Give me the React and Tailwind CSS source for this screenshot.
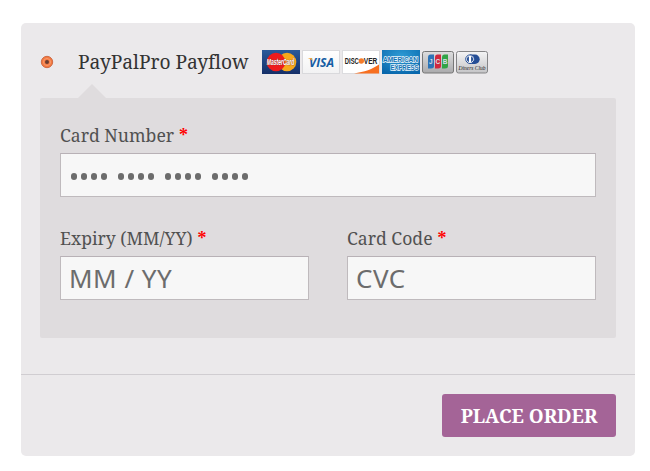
import React from "react";

const serif = "font-['Noto_Serif','Droid_Serif','DejaVu_Serif_Condensed','DejaVu_Serif',serif] [font-stretch:condensed]";
const sans = "font-['Noto_Sans','Open_Sans',sans-serif]";

function MasterCard() {
  return (
    <svg width="38" height="24" viewBox="0 0 38 24">
      <defs>
        <linearGradient id="mc" x1="0" y1="0" x2="0" y2="1">
          <stop offset="0" stopColor="#2a5a9a" />
          <stop offset="1" stopColor="#152f68" />
        </linearGradient>
      </defs>
      <rect width="38" height="24" fill="url(#mc)" />
      <circle cx="25" cy="12" r="9.300" fill="#f6a81c" />
      <circle cx="14" cy="12" r="9.300" fill="#ee1c1c" />
      <text x="4.800" y="15.200" textLength="27.500" lengthAdjust="spacingAndGlyphs" fontFamily="Liberation Sans" fontSize="8.400" fontWeight="bold" fontStyle="italic" fill="#fff" stroke="#8a3a30" strokeWidth="0.600" paintOrder="stroke">MasterCard</text>
    </svg>
  );
}

function Visa() {
  return (
    <svg width="38" height="24" viewBox="0 0 38 24">
      <defs>
        <linearGradient id="vs" x1="0" y1="0" x2="0" y2="1">
          <stop offset="0" stopColor="#fff" />
          <stop offset="1" stopColor="#f2f2f3" />
        </linearGradient>
      </defs>
      <rect x="0.5" y="0.5" width="37" height="23" fill="url(#vs)" stroke="#d9d9dc" />
      <text x="7" y="17" textLength="25" lengthAdjust="spacingAndGlyphs" fontFamily="Open Sans" fontSize="12.500" fontWeight="bold" fontStyle="italic" fill="#165da4">VISA</text>
      <path d="M5.500 8h4.200l1.300 3.600C9.700 9.700 8 8.600 5.500 8Z" fill="#f2a83b" />
    </svg>
  );
}

function Discover() {
  return (
    <svg width="38" height="24" viewBox="0 0 38 24">
      <rect x="0.5" y="0.5" width="37" height="23" fill="#fff" stroke="#dcdcdf" />
      <path d="M37 14.500C31 19 22 22 12 23.500H37Z" fill="#f76f20" />
      <text x="2.800" y="13.800" textLength="14" lengthAdjust="spacingAndGlyphs" fontFamily="Liberation Sans" fontSize="8.400" fontWeight="bold" fill="#222">DISC</text>
      <circle cx="19.300" cy="11" r="2.700" fill="#f47b2a" />
      <text x="21.800" y="13.800" textLength="13.600" lengthAdjust="spacingAndGlyphs" fontFamily="Liberation Sans" fontSize="8.400" fontWeight="bold" fill="#222">VER</text>
    </svg>
  );
}

function Amex() {
  return (
    <svg width="38" height="24" viewBox="0 0 38 24">
      <defs>
        <radialGradient id="ax" cx="0.500" cy="0.250" r="0.800">
          <stop offset="0" stopColor="#2d9ad4" />
          <stop offset="1" stopColor="#0867ac" />
        </radialGradient>
      </defs>
      <rect width="38" height="24" fill="url(#ax)" />
      <g fontFamily="Liberation Sans" fontSize="7.600" fontWeight="bold" fill="#1272b4" stroke="#e6f3fa" strokeWidth="1.500" paintOrder="stroke">
        <text x="1" y="11.500" textLength="35" lengthAdjust="spacingAndGlyphs">AMERICAN</text>
        <text x="8.500" y="19.500" textLength="28" lengthAdjust="spacingAndGlyphs">EXPRESS</text>
      </g>
    </svg>
  );
}

function Jcb() {
  return (
    <svg width="32" height="24" viewBox="0 0 32 24">
      <defs>
        <linearGradient id="jc" x1="0" y1="0" x2="0" y2="1">
          <stop offset="0" stopColor="#dededf" />
          <stop offset="1" stopColor="#aaaaac" />
        </linearGradient>
      </defs>
      <rect x="0.500" y="1.500" width="31" height="21.500" rx="2" fill="url(#jc)" stroke="#777" />
      <path d="M8.500 4.500H12V16q0 2.500-3 2.500H6V7.500q0-3 2.500-3Z" fill="#2d73b6" />
      <path d="M15.500 4.500H19V16q0 2.500-3 2.500H13V7.500q0-3 2.500-3Z" fill="#cf283e" />
      <path d="M22.500 4.500H26V16q0 2.500-3 2.500H20V7.500q0-3 2.500-3Z" fill="#31a447" />
      <g fontFamily="Liberation Sans" fontSize="6.500" fontWeight="bold" fill="#d6dee6">
        <text x="7" y="13.800">J</text>
        <text x="13.600" y="13.800">C</text>
        <text x="20.700" y="13.800">B</text>
      </g>
    </svg>
  );
}

function Diners() {
  return (
    <svg width="32" height="24" viewBox="0 0 32 24">
      <defs>
        <linearGradient id="dn" x1="0" y1="0" x2="0" y2="1">
          <stop offset="0" stopColor="#f4f4f5" />
          <stop offset="1" stopColor="#c5c5c7" />
        </linearGradient>
      </defs>
      <rect x="0.500" y="1.500" width="31" height="21.500" rx="2" fill="url(#dn)" stroke="#858587" />
      <path d="M14 4.500h5a4.700 4.700 0 0 1 0 9.400h-5Z" fill="#244e96" />
      <circle cx="14" cy="9.200" r="4.300" fill="#fff" stroke="#244e96" strokeWidth="1" />
      <path d="M12.900 6.200a3.200 3.200 0 0 0 0 6ZM15.100 6.200a3.200 3.200 0 0 1 0 6Z" fill="#244e96" />
      <text x="2.500" y="19.700" textLength="27" lengthAdjust="spacingAndGlyphs" fontFamily="Liberation Serif" fontSize="6.700" fontStyle="italic" fill="#222">Diners Club</text>
    </svg>
  );
}

function Field({ label, children }) {
  return (
    <label className="block">
      <span className={`${serif} flex h-[35px] items-start whitespace-nowrap text-[17.6px] leading-[35px]`}>
        <span className="text-[#515151]">{label}</span>
        <span className="ml-[5px] font-bold text-[#f00]">*</span>
      </span>
      <span className={`${sans} flex h-11 items-center border border-[#bfbabd] border-t-[#b8b1b6] bg-[#f7f7f7] px-[8px] text-[#6c6c6c]`}>
        {children}
      </span>
    </label>
  );
}

export default function App() {
  return (
    <main className="h-[471px] w-[650px] bg-white pl-[21px] pt-[23px]">
      <section className="h-[433px] w-[614px] rounded-[5px] bg-[#ebe9eb]">
        <header className="flex h-[75px] pl-[19px] pt-[27px]">
          <svg className="mt-[5px]" width="14" height="14" viewBox="0 0 14 14">
            <circle cx="7" cy="7" r="5.700" fill="#f4793f" stroke="#c86440" strokeWidth="0.900" />
            <circle cx="7" cy="7" r="3.500" fill="none" stroke="#f79b71" strokeWidth="1" />
            <circle cx="7" cy="7" r="2" fill="#6b3d31" />
          </svg>
          <span className={`${serif} ml-6 w-[184px] whitespace-nowrap text-[19.2px] leading-6 tracking-[-0.05px] text-[#333]`}>PayPalPro Payflow</span>
          <div className="flex h-6 gap-[2px]">
            <MasterCard />
            <Visa />
            <Discover />
            <Amex />
            <Jcb />
            <Diners />
          </div>
        </header>
        <div className="relative mx-[19px] h-[240px] rounded-[2px] bg-[#dfdcde] px-5 pt-5">
          <svg className="absolute left-[38px] top-[-14px]" width="28" height="14" viewBox="0 0 28 14">
            <path d="M0 14 14 0l14 14Z" fill="#dfdcde" />
          </svg>
          <Field label="Card Number">
            <span className="flex gap-[11px] pl-[2px] pt-[3px]">
              {[0, 1, 2, 3].map((g) => (
                <span key={g} className="flex gap-1">
                  {[0, 1, 2, 3].map((d) => (
                    <i key={d} className="h-[7px] w-1.5 rounded-full bg-[#6c6c6c]" />
                  ))}
                </span>
              ))}
            </span>
          </Field>
          <div className="mt-6 grid grid-cols-2 gap-x-[38px]">
            <Field label="Expiry (MM/YY)">
              <span className="text-[26px] leading-9 tracking-[0.5px]">MM / YY</span>
            </Field>
            <Field label="Card Code">
              <span className="text-[26px] leading-9 tracking-[0.5px]">CVC</span>
            </Field>
          </div>
        </div>
        <footer className="mt-[36px] flex justify-end border-t border-[#d0cdd1] pr-[19px] pt-[19px]">
          <button className={`${serif} h-[43px] w-[174px] whitespace-nowrap rounded-[3px] bg-[#a46497] pt-px text-center text-[18.9px] font-bold leading-[43px] text-white`}>PLACE ORDER</button>
        </footer>
      </section>
    </main>
  );
}
